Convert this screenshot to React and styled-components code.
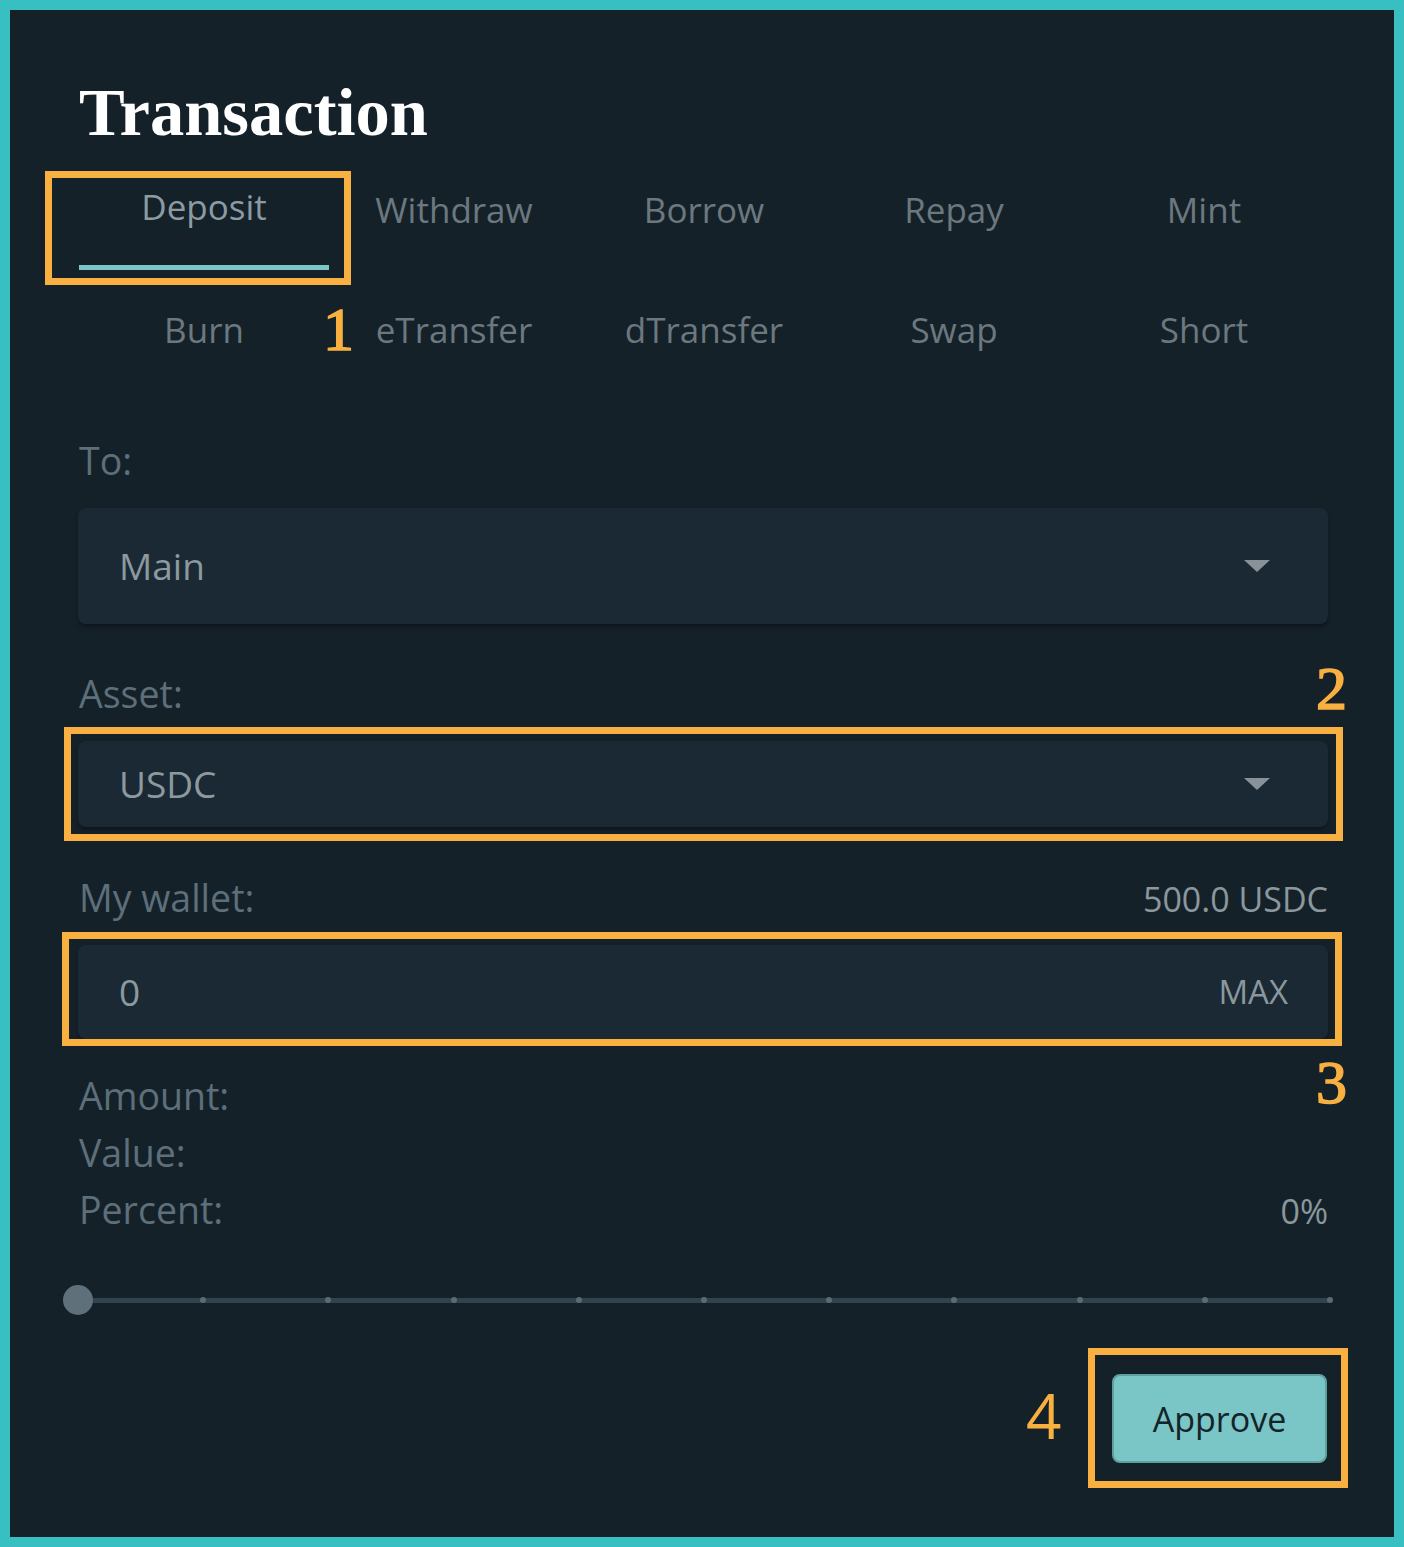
import React from 'react';
import styled, { createGlobalStyle } from 'styled-components';

const GlobalStyle = createGlobalStyle`
	html, body {
		margin: 0;
		padding: 0;
		background: #38bfc2;
	}
	body {
		font-family: "Open Sans", "Noto Sans", sans-serif;
	}
`;

const Frame = styled.div`
	width: 1404px;
	height: 1547px;
	box-sizing: border-box;
	border: 10px solid #38bfc2;
	background: #152129;
	padding: 69px 66px 0 68px;
`;

const Title = styled.h1`
	margin: 0 0 27px 1px;
	font-family: "Liberation Serif", "DejaVu Serif", serif;
	font-weight: 700;
	font-size: 68.5px;
	line-height: 67px;
	color: #ffffff;
`;

const TabGrid = styled.div`
	display: grid;
	grid-template-columns: repeat(5, 250px);
	margin-left: 1px;
`;

const Tab = styled.div`
	position: relative;
	height: 120px;
	display: flex;
	flex-direction: column;
	align-items: center;
	font-size: 35px;
	color: ${(p) => (p.$active ? '#8c9ba2' : '#6b787f')};
	cursor: pointer;

	span {
		padding-top: ${(p) => (p.$active ? '11px' : '14px')};
		line-height: 46px;
	}
	i {
		width: 100%;
		height: 5px;
		margin-top: ${(p) => (p.$active ? '35px' : '32px')};
		background: ${(p) => (p.$active ? '#7cc5c5' : 'transparent')};
	}
`;

const FieldLabel = styled.div`
	margin-top: ${(p) => p.$gap}px;
	font-size: 37.5px;
	line-height: 46px;
	color: #5d6f7a;
	padding-left: 1px;
`;

const LabelRow = styled.div`
	display: flex;
	justify-content: space-between;
	align-items: baseline;
	height: 46px;
	margin-top: 48px;
`;

const Balance = styled.div`
	font-size: 34px;
	line-height: 46px;
	color: #8a979d;
`;

const Marked = styled.div`
	position: relative;
	margin-top: ${(p) => p.$gap || 0}px;
`;

const Outline = styled.div`
	position: absolute;
	top: ${(p) => p.$t}px;
	left: ${(p) => p.$l}px;
	right: ${(p) => p.$r}px;
	bottom: ${(p) => p.$b}px;
	border: 7px solid #f8b040;
	pointer-events: none;
`;

const Num = styled.div`
	position: absolute;
	top: ${(p) => p.$t}px;
	${(p) => (p.$l !== undefined ? `left: ${p.$l}px;` : `right: ${p.$r}px;`)}
	font-family: ${(p) => (p.$sans ? '"Open Sans", sans-serif' : '"Liberation Serif", serif')};
	font-size: 62px;
	line-height: 62px;
	color: #f8b040;
	-webkit-text-stroke: ${(p) => (p.$sans ? '0' : '1.6px #f8b040')};
`;

const Select = styled.div`
	box-sizing: border-box;
	height: ${(p) => p.$h}px;
	display: flex;
	align-items: center;
	justify-content: space-between;
	padding: 0 58px 0 41px;
	background: #1b2934;
	border-radius: 8px;
	box-shadow: 0 3px 4px rgba(0, 0, 0, 0.35);
	font-size: 37px;
	line-height: 46px;
	color: #8c999f;
`;

const Caret = styled.span`
	width: 0;
	height: 0;
	border-left: 13px solid transparent;
	border-right: 13px solid transparent;
	border-top: 12px solid #8a9299;
`;

const AmountInput = styled.div`
	box-sizing: border-box;
	height: 94px;
	display: flex;
	align-items: center;
	justify-content: space-between;
	padding: 0 40px 0 41px;
	background: #1b2934;
	border-radius: 8px;
	box-shadow: 0 3px 4px rgba(0, 0, 0, 0.35);
	font-size: 37px;
	line-height: 46px;
	color: #8c999f;

	small {
		font-size: 33px;
		color: #8a979d;
	}
`;

const InfoList = styled.div`
	margin-top: 28px;
`;

const InfoRow = styled.div`
	display: flex;
	justify-content: space-between;
	align-items: baseline;
	height: 57px;
	font-size: 37.5px;
	line-height: 57px;
	color: #5d6f7a;
	padding-left: 1px;

	b {
		font-weight: 400;
		font-size: 34px;
		color: #8a979d;
	}
`;

const Slider = styled.div`
	position: relative;
	margin-top: 47px;
	height: 30px;
	display: flex;
	align-items: center;
`;

const Track = styled.div`
	flex: 1;
	margin-right: -2px;
	height: 5px;
	border-radius: 3px;
	background: #33434d;
	display: flex;
	align-items: center;
	justify-content: space-between;

	i {
		width: 6px;
		height: 6px;
		border-radius: 50%;
		background: #5b6b74;
		margin: 0 -3px;
	}
`;

const Thumb = styled.div`
	position: absolute;
	left: -15px;
	top: 0;
	width: 30px;
	height: 30px;
	border-radius: 50%;
	background: #5f707a;
`;

const Actions = styled.div`
	display: flex;
	justify-content: flex-end;
	margin-top: 59px;
	margin-right: 1px;
`;

const Button = styled.button`
	width: 215px;
	height: 89px;
	background: #7ac5c5;
	border: 2px solid #5e9fa2;
	border-radius: 8px;
	font-family: "Open Sans", sans-serif;
	font-size: 34px;
	color: #14232a;
	cursor: pointer;
`;

const tabs = ['Deposit', 'Withdraw', 'Borrow', 'Repay', 'Mint', 'Burn', 'eTransfer', 'dTransfer', 'Swap', 'Short'];

const App = () => {
	return (
		<>
			<GlobalStyle />
			<Frame>
				<Title>Transaction</Title>
				<TabGrid>
					{tabs.map((t, i) => (
						<Tab key={t} $active={i === 0}>
							<span>{t}</span>
							<i />
							{i === 0 && (
								<>
									<Outline $t={-2} $l={-34} $r={-22} $b={8} />
									<Num $t={125} $l={244}>1</Num>
								</>
							)}
						</Tab>
					))}
				</TabGrid>

				<FieldLabel $gap={25}>To:</FieldLabel>
				<Marked $gap={24}>
					<Select $h={116}>
						Main
						<Caret />
					</Select>
				</Marked>

				<FieldLabel $gap={47}>Asset:</FieldLabel>
				<Marked $gap={24}>
					<Select $h={86}>
						USDC
						<Caret />
					</Select>
					<Outline $t={-14} $l={-14} $r={-15} $b={-14} />
					<Num $t={-84} $r={-19}>2</Num>
				</Marked>

				<LabelRow>
					<FieldLabel $gap={0}>My wallet:</FieldLabel>
					<Balance>500.0 USDC</Balance>
				</LabelRow>
				<Marked $gap={24}>
					<AmountInput>
						0
						<small>MAX</small>
					</AmountInput>
					<Outline $t={-13} $l={-16} $r={-14} $b={-7} />
					<Num $t={106} $r={-19}>3</Num>
				</Marked>

				<InfoList>
					<InfoRow>Amount:</InfoRow>
					<InfoRow>Value:</InfoRow>
					<InfoRow>
						Percent:
						<b>0%</b>
					</InfoRow>
				</InfoList>

				<Slider>
					<Track>
						{Array.from({ length: 11 }).map((_, i) => (
							<i key={i} />
						))}
					</Track>
					<Thumb />
				</Slider>

				<Actions>
					<Marked>
						<Button>Approve</Button>
						<Outline $t={-26} $l={-24} $r={-21} $b={-25} />
						<Num $sans $t={10} $l={-86}>4</Num>
					</Marked>
				</Actions>
			</Frame>
		</>
	);
};

export default App;
